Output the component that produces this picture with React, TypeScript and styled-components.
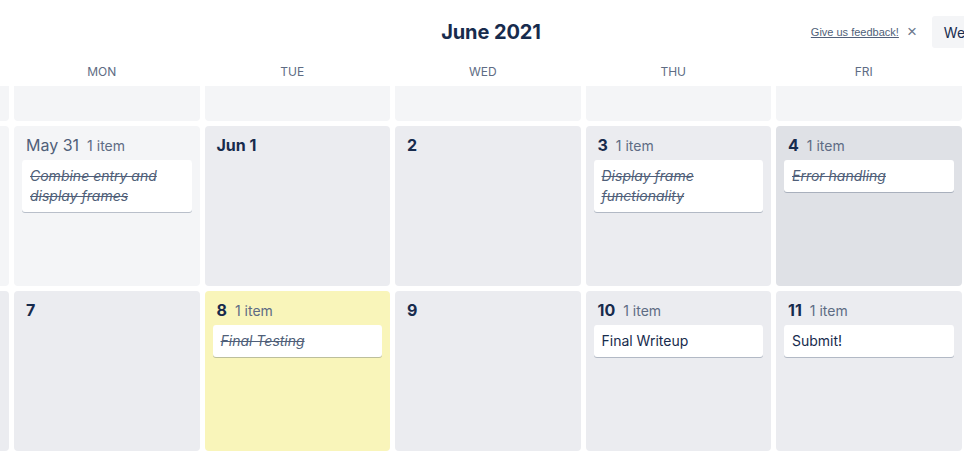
import React from "react";
import styled, { createGlobalStyle } from "styled-components";

const Global = createGlobalStyle`
  html, body { margin: 0; padding: 0; background: #ffffff; overflow: hidden; }
  body { font-family: Inter, "Noto Sans", "Liberation Sans", sans-serif; color: #172b4d; }
`;

const Viewport = styled.div`
  width: 964px;
  height: 454px;
  overflow: hidden;
`;

const Board = styled.div`
  width: 1332px;
  margin-left: -176.5px;
  display: flex;
  flex-direction: column;
`;

const TopBar = styled.header`
  height: 64px;
  display: grid;
  grid-template-columns: 1fr auto 1fr;
  align-items: center;
`;

const Title = styled.h1`
  grid-column: 2;
  margin: 0;
  font-size: 20px;
  line-height: 24px;
  font-weight: 700;
  color: #172b4d;
  letter-spacing: -0.1px;
  padding-left: 3px;
`;

const Actions = styled.div`
  grid-column: 3;
  display: flex;
  align-items: center;
  padding-left: 270px;
`;

const FeedbackLink = styled.a`
  font-family: "Liberation Sans", Arial, sans-serif;
  font-size: 11px;
  line-height: 14px;
  color: #505f79;
  text-decoration: underline;
  cursor: pointer;
  white-space: nowrap;
`;

const CloseX = styled.span`
  margin-left: 8px;
  font-family: "Liberation Sans", Arial, sans-serif;
  font-size: 17px;
  line-height: 14px;
  color: #6b778c;
`;

const ViewButton = styled.button`
  margin-left: 15px;
  height: 32px;
  padding: 0 12px;
  border: none;
  border-radius: 3px;
  background: #f4f5f7;
  font-family: inherit;
  font-size: 14px;
  color: #172b4d;
  white-space: nowrap;
`;

const DayLabels = styled.div`
  display: grid;
  grid-template-columns: repeat(7, 185.5px);
  column-gap: 5px;
  padding-top: 1px;
  margin-bottom: 7px;
`;

const DayLabel = styled.div`
  text-align: center;
  padding-right: 10px;
  font-size: 12px;
  line-height: 14px;
  color: #5e6c84;
  text-transform: uppercase;
`;

const Grid = styled.div`
  display: grid;
  grid-template-columns: repeat(7, 185.5px);
  grid-template-rows: 35px 160px 160px;
  gap: 5px;
`;

type Tone = "past" | "normal" | "hover" | "today";

const toneBg: Record<Tone, string> = {
  past: "#f4f5f7",
  normal: "#ebecf0",
  hover: "#dfe1e6",
  today: "#f9f5ba",
};

const Cell = styled.div<{ $tone: Tone; $clipped?: boolean }>`
  background: ${(p) => toneBg[p.$tone]};
  border-radius: ${(p) => (p.$clipped ? "0 0 4px 4px" : "4px")};
  padding: 8px;
  box-sizing: border-box;
  display: flex;
  flex-direction: column;
  overflow: hidden;
`;

const CellHead = styled.div`
  height: 22px;
  display: flex;
  align-items: baseline;
  padding: 0 4px;
  margin-bottom: 4px;
  white-space: nowrap;
`;

const DateText = styled.span<{ $muted?: boolean }>`
  font-size: 16px;
  line-height: 22px;
  font-weight: ${(p) => (p.$muted ? 400 : 700)};
  color: ${(p) => (p.$muted ? "#505f79" : "#172b4d")};
`;

const Count = styled.span`
  margin-left: 8px;
  font-size: 14px;
  line-height: 22px;
  color: #5e6c84;
`;

const Card = styled.div<{ $done?: boolean }>`
  background: #ffffff;
  border-radius: 3px;
  box-shadow: 0 1px 0 rgba(9, 30, 66, 0.25);
  padding: 6px 8px;
  font-size: 14px;
  line-height: 20px;
  color: ${(p) => (p.$done ? "#505f79" : "#172b4d")};
  font-style: ${(p) => (p.$done ? "italic" : "normal")};
  text-decoration: ${(p) => (p.$done ? "line-through" : "none")};
`;

type Day = {
  label?: string;
  muted?: boolean;
  tone: Tone;
  items?: { text: string; done?: boolean }[];
};

const days = ["Sun", "Mon", "Tue", "Wed", "Thu", "Fri", "Sat"];

const weeks: Day[][] = [
  [
    { tone: "past" },
    { tone: "past" },
    { tone: "past" },
    { tone: "past" },
    { tone: "past" },
    { tone: "past" },
    { tone: "past" },
  ],
  [
    { label: "May 30", muted: true, tone: "past" },
    {
      label: "May 31",
      muted: true,
      tone: "past",
      items: [{ text: "Combine entry and display frames", done: true }],
    },
    { label: "Jun 1", tone: "normal" },
    { label: "2", tone: "normal" },
    {
      label: "3",
      tone: "normal",
      items: [{ text: "Display frame functionality", done: true }],
    },
    { label: "4", tone: "hover", items: [{ text: "Error handling", done: true }] },
    { label: "5", tone: "normal" },
  ],
  [
    { label: "6", tone: "normal" },
    { label: "7", tone: "normal" },
    { label: "8", tone: "today", items: [{ text: "Final Testing", done: true }] },
    { label: "9", tone: "normal" },
    { label: "10", tone: "normal", items: [{ text: "Final Writeup" }] },
    { label: "11", tone: "normal", items: [{ text: "Submit!" }] },
    { label: "12", tone: "normal" },
  ],
];

export default function App() {
  return (
    <Viewport>
      <Global />
      <Board>
        <TopBar>
          <Title>June 2021</Title>
          <Actions>
            <FeedbackLink>Give us feedback!</FeedbackLink>
            <CloseX>×</CloseX>
            <ViewButton>Week</ViewButton>
          </Actions>
        </TopBar>
        <DayLabels>
          {days.map((d) => (
            <DayLabel key={d}>{d}</DayLabel>
          ))}
        </DayLabels>
        <Grid>
          {weeks.map((week, wi) =>
            week.map((day, di) => (
              <Cell key={`${wi}-${di}`} $tone={day.tone} $clipped={wi === 0}>
                {day.label && (
                  <CellHead>
                    <DateText $muted={day.muted}>{day.label}</DateText>
                    {day.items && day.items.length > 0 && (
                      <Count>
                        {day.items.length} item{day.items.length > 1 ? "s" : ""}
                      </Count>
                    )}
                  </CellHead>
                )}
                {day.items?.map((it) => (
                  <Card key={it.text} $done={it.done}>
                    {it.text}
                  </Card>
                ))}
              </Cell>
            ))
          )}
        </Grid>
      </Board>
    </Viewport>
  );
}
